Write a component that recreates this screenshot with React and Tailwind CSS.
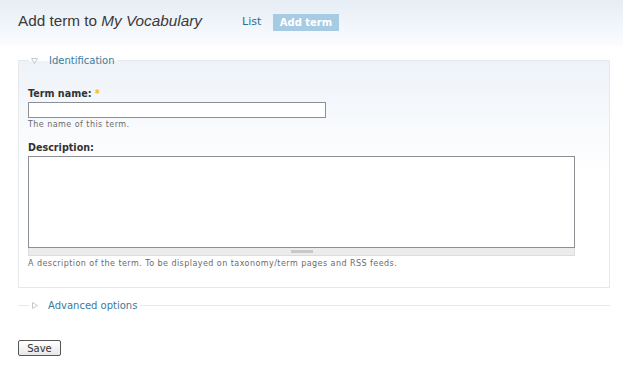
import React from "react";

const TriDown = () => (
  <svg width="7" height="6" viewBox="0 0 7 6" className="inline-block">
    <path d="M0.5 0.5 H6.5 L3.5 5.5 Z" fill="none" stroke="#c3cbd2" strokeWidth="1" />
  </svg>
);

const TriRight = () => (
  <svg width="6" height="7" viewBox="0 0 6 7" className="inline-block">
    <path d="M0.5 0.5 V6.5 L5.5 3.5 Z" fill="none" stroke="#c3cbd2" strokeWidth="1" />
  </svg>
);

const App = () => {
  return (
    <div className="w-[623px] h-[381px] bg-white overflow-hidden font-['DejaVu_Sans',sans-serif] text-[#494949]">
      {/* Header with tabs */}
      <div className="h-[46px] bg-gradient-to-b from-[#e6edf5] to-[#fbfcfe] flex items-center px-[18px] pb-[3px]">
        <h1 className="font-['Liberation_Sans',Arial,sans-serif] text-[15.3px] text-[#3a3a3a] w-[224px]">
          Add term to <em>My Vocabulary</em>
        </h1>
        <span className="text-[11px] text-[#2b6f92] w-[31px] pt-[2px]">List</span>
        <span className="w-[66px] h-[17px] bg-[#a8cbe4] text-white font-bold text-[10px] flex items-center justify-center mt-[2px]">
          Add term
        </span>
      </div>

      {/* Identification fieldset */}
      <fieldset className="ml-[18px] mr-[13px] mt-[7px] border border-[#e6e9ec] bg-gradient-to-b from-[#eef3f9] via-white to-white h-[235px] pl-[9px]">
        <legend className="ml-[1px] px-[2px] text-[10px] leading-[15px] text-[#3c7b9c] flex items-center gap-[11px]">
          <TriDown />
          <span>Identification</span>
        </legend>

        <div className="pt-[20px] text-[9.6px] leading-[12px] font-bold text-[#333]">
          Term name: <span className="text-[#f0b828]">*</span>
        </div>
        <div className="mt-[2px] w-[298px] h-[16px] border border-[#8c8f93] bg-white" />
        <div className="mt-[1px] text-[8px] leading-[11px] text-[#6b6b6b] tracking-[0.45px]">The name of this term.</div>

        <div className="mt-[12px] text-[9.6px] leading-[12px] font-bold text-[#333]">Description:</div>
        <div className="mt-[2px] w-[547px] h-[92px] border border-[#8c8f93] bg-white" />
        <div className="w-[547px] h-[8px] bg-[#ececec] border-x border-b border-[#dcdcdc] flex justify-center items-center">
          <div className="w-[22px] h-[3px] bg-[#c8c8c8]" />
        </div>
        <div className="mt-[2px] text-[8px] leading-[11px] text-[#6b6b6b] tracking-[0.45px]">
          A description of the term. To be displayed on taxonomy/term pages and RSS feeds.
        </div>
      </fieldset>

      {/* Advanced options (collapsed) */}
      <fieldset className="ml-[18px] mr-[13px] mt-[10px] border-t border-[#e6e9ec] h-[6px]">
        <legend className="ml-[11px] px-[3px] text-[10px] leading-[15px] text-[#3c7b9c] flex items-center gap-[10px]">
          <TriRight />
          <span>Advanced options</span>
        </legend>
      </fieldset>

      <div className="px-[18px] mt-[27px]">
        <button
          type="button"
          className="w-[43px] h-[16px] border border-[#555] rounded-[2px] bg-gradient-to-b from-white to-[#e8e8e8] text-[10px] text-[#333] flex items-center justify-center"
        >
          Save
        </button>
      </div>
    </div>
  );
};

export default App;
